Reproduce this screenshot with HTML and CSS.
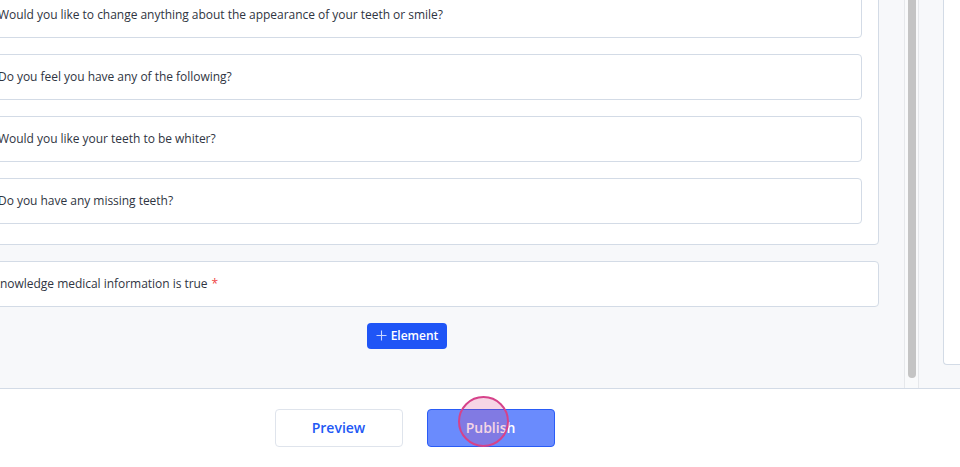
FILE: index.html
```html
<!DOCTYPE html>
<html>
  <head>
    <title>Form Builder</title>
    <link rel="stylesheet" href="styles.css">
  </head>
  <body>
    <div class="workspace">
      <main class="canvas">
        <div class="canvas-inner">
          <section class="group">
            <div class="field">Would you like to change anything about the appearance of your teeth or smile?</div>
            <div class="field">Do you feel you have any of the following?</div>
            <div class="field">Would you like your teeth to be whiter?</div>
            <div class="field">Do you have any missing teeth?</div>
          </section>
          <div class="field field-single">I acknowledge medical information is true <span class="required">*</span></div>
          <div class="add-row">
            <button type="button" class="add-btn">
              <svg width="11" height="11" viewBox="0 0 11 11"><path d="M5.5 0.5v10M0.5 5.5h10" stroke="currentColor" stroke-width="1.1" fill="none"/></svg>
              Element
            </button>
          </div>
        </div>
      </main>
      <div class="scroll-gutter">
        <div class="scroll-thumb"></div>
      </div>
      <aside class="side-panel">
        <div class="side-box"></div>
      </aside>
    </div>

    <footer class="actions">
      <button type="button" class="btn btn-outline">Preview</button>
      <button type="button" class="btn btn-primary">
        Publish
        <span class="click-ring"></span>
      </button>
    </footer>
  </body>
</html>
```

FILE: styles.css
```css
/* Global styles */
body {
  font-family: "Open Sans", "Liberation Sans", sans-serif;
  margin: 0;
  padding: 0;
  background-color: #ffffff;
  color: #2f3542;
  overflow: hidden;
}

/* Builder workspace */
.workspace {
  display: flex;
  height: 388px;
  border-bottom: 1px solid #d3dbe6;
}

.canvas {
  flex: 0 0 904px;
  background-color: #f7f8fa;
  overflow: hidden;
}

.canvas-inner {
  display: flex;
  flex-direction: column;
  gap: 16px;
  margin-top: -25px;
  margin-left: -30px;
  width: 909px;
}

.group {
  display: flex;
  flex-direction: column;
  gap: 16px;
  background-color: #ffffff;
  border: 1px solid #d3dbe6;
  border-radius: 4px;
  padding: 16px 16px 20px 16px;
}

.field {
  display: flex;
  align-items: center;
  height: 44px;
  padding: 0 10px 2px 10px;
  box-sizing: content-box;
  height: 42px;
  background-color: #ffffff;
  border: 1px solid #d3dbe6;
  border-radius: 4px;
  font-size: 12px;
  letter-spacing: -0.03px;
}

.field-single {
  padding-left: 4px;
}

.required {
  color: #ef4444;
  margin-left: 4px;
}

.add-row {
  display: flex;
  justify-content: center;
  margin-left: -35px;
}

.add-btn {
  display: flex;
  align-items: center;
  gap: 4px;
  height: 26px;
  padding: 0 9px 1px 9px;
  background-color: #1f55f6;
  border: none;
  border-radius: 4px;
  color: #ffffff;
  font-family: inherit;
  font-size: 12px;
  font-weight: 600;
}

.add-btn svg {
  color: #c9d6ff;
}

/* Scrollbar */
.scroll-gutter {
  flex: 0 0 13px;
  border-left: 1px solid #e6e8eb;
  border-right: 1px solid #e6e8eb;
  background-color: #f9fafb;
  display: flex;
  justify-content: center;
}

.scroll-thumb {
  width: 8px;
  height: 378px;
  background-color: #c4c4c4;
  border-radius: 0 0 4px 4px;
}

/* Settings panel */
.side-panel {
  flex: 1;
  background-color: #f7f8fa;
  padding-left: 24px;
  overflow: hidden;
}

.side-box {
  height: 368px;
  margin-top: -5px;
  background-color: #ffffff;
  border: 1px solid #d3dbe6;
  border-right: none;
  border-radius: 0 0 0 4px;
}

/* Footer actions */
.actions {
  display: flex;
  justify-content: center;
  align-items: center;
  gap: 24px;
  height: 78px;
  padding-right: 131px;
}

.btn {
  position: relative;
  width: 128px;
  height: 38px;
  padding-bottom: 2px;
  border-radius: 4px;
  font-family: inherit;
  font-size: 14px;
  font-weight: 600;
}

.btn-outline {
  background-color: #ffffff;
  border: 1px solid #dfe4ec;
  color: #2258f5;
}

.btn-primary {
  background-color: #6a8bfd;
  border: 1px solid #2a5cf6;
  color: #ffffff;
}

.click-ring {
  position: absolute;
  left: 30px;
  top: -14px;
  width: 47px;
  height: 47px;
  border: 2px solid #d6428a;
  border-radius: 50%;
  background-color: rgba(214, 66, 138, 0.22);
}
```
